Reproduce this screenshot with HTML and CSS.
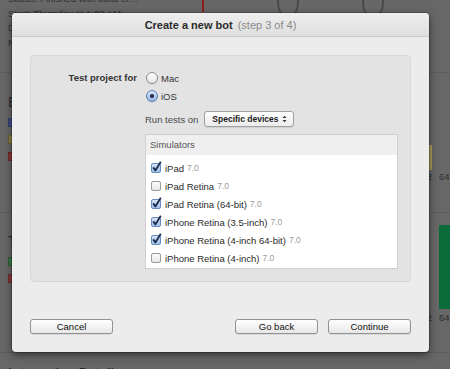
FILE: index.html
```html
<!DOCTYPE html>
<html>
<head>
    <title>Create a new bot</title>
    <link rel="stylesheet" href="styles.css">
</head>
<body>

    <div class="page">
        <div class="summary-strip">
            <div class="summary">
                <p>Status: Finished with build er…</p>
                <p>Start: Thursday at 1:00 AM</p>
                <p>Duration: 4 minutes</p>
                <p>Next: Friday at 1:00 AM</p>
            </div>
            <div class="timeline">
                <span class="now-marker"></span>
                <span class="ring ring-first"></span>
                <span class="ring ring-second"></span>
            </div>
        </div>

        <div class="section section-issues">
            <div class="legend">
                <h2>Errors and Warnings</h2>
                <ul>
                    <li><span class="swatch blue"></span>Analysis issues</li>
                    <li><span class="swatch yellow"></span>Warnings</li>
                    <li><span class="swatch red"></span>Errors</li>
                </ul>
            </div>
            <div class="chart">
                <div class="bars">
                    <div class="col"><span class="bar yellow" style="height: 25px;"></span></div>
                    <div class="col"></div>
                </div>
                <div class="labels">
                    <span class="col">32</span>
                    <span class="col">64</span>
                </div>
            </div>
        </div>

        <div class="section section-tests">
            <div class="legend">
                <h2>Tests</h2>
                <ul>
                    <li><span class="swatch green"></span>Passed</li>
                    <li><span class="swatch red"></span>Failed</li>
                </ul>
            </div>
            <div class="chart">
                <div class="bars">
                    <div class="col"></div>
                    <div class="col"><span class="bar green" style="height: 84px;"></span></div>
                </div>
                <div class="labels">
                    <span class="col">32</span>
                    <span class="col">64</span>
                </div>
            </div>
        </div>

        <h2 class="details-title">Integration Details</h2>
    </div>

    <div class="sheet">
        <div class="sheet-title">
            Create a new bot <span class="step">(step 3 of 4)</span>
        </div>

        <div class="sheet-body">
            <div class="group">
                <div class="field-label">Test project for</div>
                <div class="field">
                    <label class="radio-row"><span class="radio"></span>Mac</label>
                    <label class="radio-row"><span class="radio checked"></span>iOS</label>

                    <div class="run-row">
                        <span class="run-label">Run tests on</span>
                        <div class="popup">
                            Specific devices
                            <svg class="popup-arrows" width="5" height="8" viewBox="0 0 5 8">
                                <path d="M0.5 3 L2.5 0.8 L4.5 3 Z M0.5 5 L2.5 7.2 L4.5 5 Z" fill="#333"/>
                            </svg>
                        </div>
                    </div>

                    <div class="sim-list">
                        <div class="sim-header">Simulators</div>
                        <ul class="sim-rows">
                            <li>
                                <svg class="check" width="12" height="12" viewBox="0 0 12 12"><rect class="box on" x="0.5" y="2.5" width="9" height="9" rx="1.5"/><path d="M2.2 6.4 L4.4 9.4 L9.8 0.8" fill="none" stroke="#1c2a4c" stroke-width="1.8" stroke-linejoin="round"/></svg>
                                iPad <span class="ver">7.0</span>
                            </li>
                            <li>
                                <svg class="check" width="12" height="12" viewBox="0 0 12 12"><rect class="box" x="0.5" y="2.5" width="9" height="9" rx="1.5"/></svg>
                                iPad Retina <span class="ver">7.0</span>
                            </li>
                            <li>
                                <svg class="check" width="12" height="12" viewBox="0 0 12 12"><rect class="box on" x="0.5" y="2.5" width="9" height="9" rx="1.5"/><path d="M2.2 6.4 L4.4 9.4 L9.8 0.8" fill="none" stroke="#1c2a4c" stroke-width="1.8" stroke-linejoin="round"/></svg>
                                iPad Retina (64-bit) <span class="ver">7.0</span>
                            </li>
                            <li>
                                <svg class="check" width="12" height="12" viewBox="0 0 12 12"><rect class="box on" x="0.5" y="2.5" width="9" height="9" rx="1.5"/><path d="M2.2 6.4 L4.4 9.4 L9.8 0.8" fill="none" stroke="#1c2a4c" stroke-width="1.8" stroke-linejoin="round"/></svg>
                                iPhone Retina (3.5-inch) <span class="ver">7.0</span>
                            </li>
                            <li>
                                <svg class="check" width="12" height="12" viewBox="0 0 12 12"><rect class="box on" x="0.5" y="2.5" width="9" height="9" rx="1.5"/><path d="M2.2 6.4 L4.4 9.4 L9.8 0.8" fill="none" stroke="#1c2a4c" stroke-width="1.8" stroke-linejoin="round"/></svg>
                                iPhone Retina (4-inch 64-bit) <span class="ver">7.0</span>
                            </li>
                            <li>
                                <svg class="check" width="12" height="12" viewBox="0 0 12 12"><rect class="box" x="0.5" y="2.5" width="9" height="9" rx="1.5"/></svg>
                                iPhone Retina (4-inch) <span class="ver">7.0</span>
                            </li>
                        </ul>
                    </div>
                </div>
            </div>

            <div class="actions">
                <button class="btn">Cancel</button>
                <span class="spacer"></span>
                <button class="btn">Go back</button>
                <button class="btn">Continue</button>
            </div>
        </div>
    </div>

    <svg width="0" height="0" style="position: absolute;">
        <defs>
            <linearGradient id="boxOff" x1="0" y1="0" x2="0" y2="1">
                <stop offset="0" stop-color="#ffffff"/>
                <stop offset="1" stop-color="#e4e4e4"/>
            </linearGradient>
            <linearGradient id="boxOn" x1="0" y1="0" x2="0" y2="1">
                <stop offset="0" stop-color="#d9e7f8"/>
                <stop offset="1" stop-color="#9dbde8"/>
            </linearGradient>
        </defs>
    </svg>

</body>
</html>
```

FILE: styles.css
```css
html, body {
    margin: 0;
    padding: 0;
    height: 100%;
    overflow: hidden;
}

body {
    background-color: #676767;
    font-family: 'Liberation Sans', Arial, sans-serif;
    color: #2c2c2c;
    position: relative;
}

/* dimmed page behind the sheet */

.page {
    padding-left: 8px;
}

.summary-strip {
    height: 72px;
    border-bottom: 1px solid #5c5c5c;
    margin-left: -8px;
    padding-left: 8px;
    display: flex;
    overflow: hidden;
}

.summary {
    width: 194px;
    margin-top: -8px;
    font-size: 9.5px;
    color: #303030;
}

.summary p {
    margin: 0;
    line-height: 14.5px;
    white-space: nowrap;
}

.timeline {
    display: flex;
    align-items: flex-start;
}

.now-marker {
    width: 2px;
    height: 12px;
    background-color: #8e1e1e;
}

.ring {
    width: 18px;
    height: 26px;
    margin-top: -12px;
    border: 2px solid #4a4a4a;
    border-radius: 50%;
}

.ring-first {
    margin-left: 73px;
}

.ring-second {
    margin-left: 63px;
}

.section {
    height: 139px;
    border-bottom: 1px solid #5c5c5c;
    margin-left: -8px;
    padding-left: 8px;
    display: flex;
}

.legend h2 {
    margin: 0;
    font-size: 14px;
    font-weight: normal;
    line-height: 18px;
    color: #2a2a2a;
}

.legend ul {
    list-style: none;
    margin: 0;
    padding: 0;
    font-size: 9.5px;
}

.legend li {
    display: flex;
    align-items: center;
    gap: 6px;
    height: 17px;
}

.section-issues .legend {
    padding-top: 20px;
}

.section-issues .legend ul {
    margin-top: 3px;
}

.section-tests .legend {
    padding-top: 19px;
}

.section-tests .legend ul {
    margin-top: 3px;
}

.swatch {
    width: 8px;
    height: 9px;
    border: 1px solid rgba(0, 0, 0, 0.25);
    box-sizing: border-box;
}

.swatch.blue { background-color: #45528e; }
.swatch.yellow { background-color: #8e8048; }
.swatch.red { background-color: #8c3838; }
.swatch.green { background-color: #3f7d4b; }

.chart {
    margin-left: auto;
    display: flex;
    flex-direction: column;
}

.bars {
    display: flex;
    align-items: flex-end;
    gap: 7px;
}

.labels {
    display: flex;
    gap: 7px;
    font-size: 9.5px;
    color: #2e2e2e;
    line-height: 14px;
}

.col {
    width: 11px;
    display: flex;
    justify-content: flex-start;
}

.bars .col:first-child,
.labels .col:first-child {
    width: 8px;
    justify-content: flex-end;
}

.bar {
    display: block;
    width: 100%;
}

.bar.yellow { background-color: #a89a5c; }
.bar.green { background-color: #0b6a3a; }

.section-issues .bars {
    height: 70px;
    margin-top: 27px;
}

.section-tests .bars {
    height: 84px;
    margin-top: 12px;
}

.section-tests .labels {
    margin-top: 2px;
}

.details-title {
    margin: 12px 0 0;
    font-size: 13px;
    font-weight: bold;
    color: #2a2a2a;
}

/* the sheet */

.sheet {
    position: absolute;
    left: 12px;
    top: 13px;
    width: 417px;
    height: 339px;
    background-color: #ececec;
    border-radius: 4px;
    box-shadow: 0 0 0 1px rgba(0, 0, 0, 0.2), 0 3px 8px rgba(0, 0, 0, 0.5);
    display: flex;
    flex-direction: column;
    font-size: 9.5px;
    color: #1c1c1c;
}

.sheet-title {
    height: 24px;
    box-sizing: border-box;
    padding-top: 1px;
    border-bottom: 1px solid #cacaca;
    border-radius: 4px 4px 0 0;
    background: linear-gradient(#eeeeee, #dfdfdf);
    display: flex;
    align-items: center;
    justify-content: center;
    font-size: 11px;
    font-weight: bold;
    color: #2b2b2b;
}

.sheet-title .step {
    font-weight: normal;
    color: #8a8a8a;
    margin-left: 5px;
}

.sheet-body {
    flex: 1;
    padding: 18px;
    display: flex;
    flex-direction: column;
}

.group {
    background-color: #e3e3e3;
    border: 1px solid #d8d8d8;
    border-radius: 4px;
    padding: 13px 12px 12px 0;
    display: grid;
    grid-template-columns: 106px 1fr;
    column-gap: 8px;
}

.field-label {
    text-align: right;
    font-weight: bold;
    line-height: 18px;
    color: #333;
}

.field {
    display: flex;
    flex-direction: column;
}

.radio-row {
    display: flex;
    align-items: center;
    gap: 3px;
    height: 18px;
    color: #333;
}

.radio {
    width: 12px;
    height: 12px;
    margin-left: 1px;
    box-sizing: border-box;
    border: 1px solid #8f8f8f;
    border-radius: 50%;
    background: linear-gradient(#ffffff, #e6e6e6);
    box-shadow: 0 1px 0 rgba(0, 0, 0, 0.06);
    display: flex;
    align-items: center;
    justify-content: center;
}

.radio.checked {
    border-color: #5b7eb3;
    background: linear-gradient(#d6e5f7, #97b8e6);
}

.radio.checked::after {
    content: "";
    width: 4px;
    height: 4px;
    border-radius: 50%;
    background-color: #1b2744;
}

.run-row {
    display: flex;
    align-items: center;
    gap: 6px;
    margin-top: 6px;
    height: 16px;
}

.run-label {
    color: #4a4a4a;
}

.popup {
    width: 90px;
    height: 16px;
    box-sizing: border-box;
    border: 1px solid #a0a0a0;
    border-radius: 3px;
    background: linear-gradient(#ffffff, #ececec);
    box-shadow: 0 1px 0 rgba(0, 0, 0, 0.08);
    display: flex;
    align-items: center;
    padding: 0 6px 0 7px;
    font-size: 8.5px;
    font-weight: bold;
    color: #222;
}

.popup-arrows {
    margin-left: auto;
}

.sim-list {
    margin-top: 7px;
    border: 1px solid #d0d0d0;
    background-color: #ffffff;
}

.sim-header {
    height: 20px;
    line-height: 20px;
    padding-left: 4px;
    background-color: #efefef;
    color: #555;
}

.sim-rows {
    list-style: none;
    margin: 0;
    padding: 4px 0 1px;
}

.sim-rows li {
    display: flex;
    align-items: center;
    height: 18px;
    padding-left: 5px;
    color: #2a2a2a;
    white-space: nowrap;
}

.check {
    overflow: visible;
    margin-right: 2px;
    margin-top: -2px;
}

.check .box {
    fill: url(#boxOff);
    stroke: #9b9b9b;
    stroke-width: 1;
}

.check .box.on {
    fill: url(#boxOn);
    stroke: #6b8cbf;
}

.ver {
    color: #9c9c9c;
    font-size: 8.5px;
    margin-left: 3px;
}

.actions {
    margin-top: auto;
    display: flex;
    gap: 10px;
}

.spacer {
    flex: 1;
}

.btn {
    width: 83px;
    height: 15px;
    padding: 0;
    border: 1px solid #929292;
    border-radius: 3px;
    background: linear-gradient(#ffffff, #f3f3f3 50%, #e7e7e7);
    box-shadow: 0 1px 0 rgba(0, 0, 0, 0.08);
    font-family: 'Liberation Sans', Arial, sans-serif;
    font-size: 9.5px;
    color: #111;
    line-height: 13px;
}
```
